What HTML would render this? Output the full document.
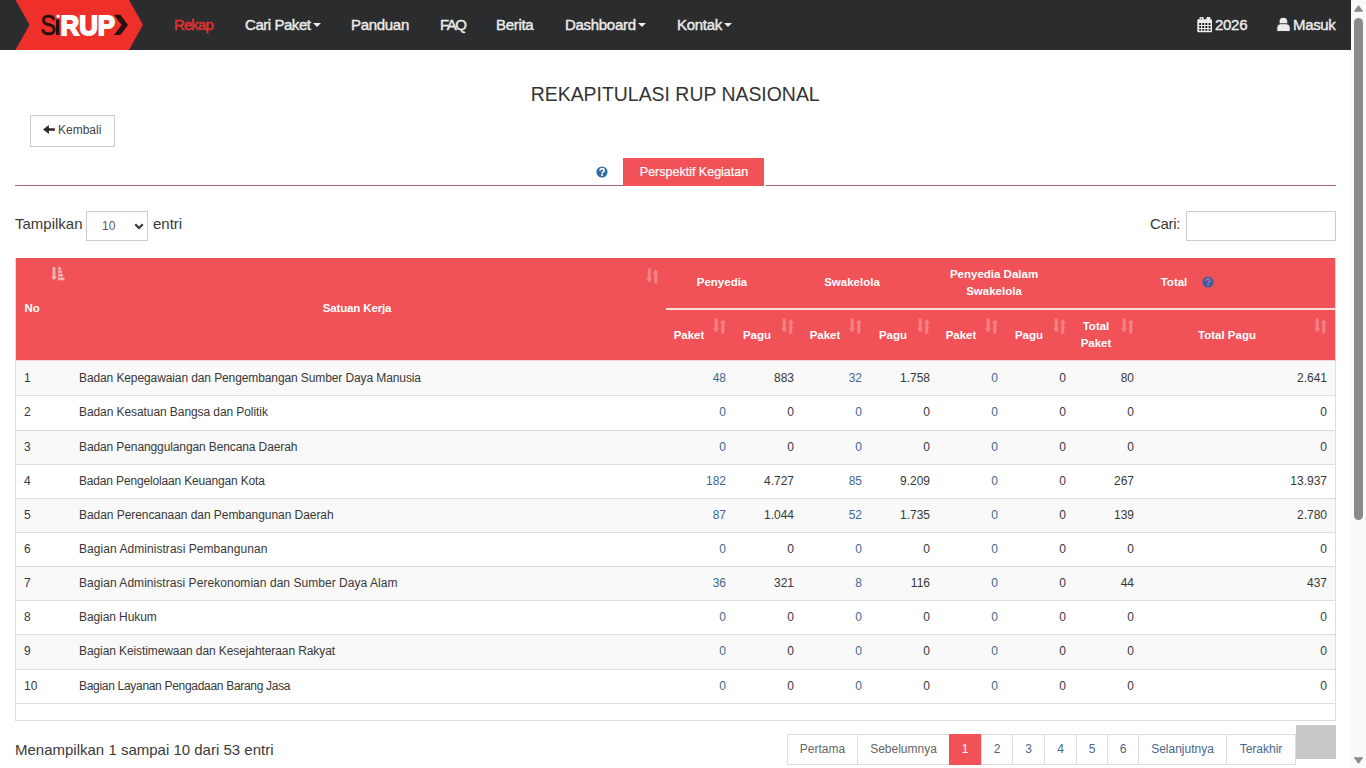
<!DOCTYPE html>
<html><head><meta charset="utf-8">
<style>
*{box-sizing:border-box}
html,body{margin:0;padding:0;width:1366px;height:768px;overflow:hidden;background:#fff;font-family:"Liberation Sans",sans-serif;color:#333}
.a{position:absolute;white-space:nowrap}
#nav{position:absolute;left:0;top:0;width:1351px;height:50px;background:#2b2c2e}
.ni{position:absolute;top:16px;font-size:15px;line-height:18px;color:#ececec;white-space:nowrap;letter-spacing:-0.3px;-webkit-text-stroke:0.4px #ececec}
.caret{display:inline-block;width:0;height:0;border-left:4px solid transparent;border-right:4px solid transparent;border-top:4px solid #ececec;vertical-align:middle;margin-left:2px;position:relative;top:-1px}
#sb{position:absolute;left:1351px;top:0;width:15px;height:768px;background:#fafafa}
#thumb{position:absolute;left:3px;top:18px;width:9px;height:502px;background:#8a8a8a;border-radius:5px}
#title{position:absolute;left:0;width:1351px;top:82px;text-align:center;font-size:21px;line-height:24px;color:#333}
#title span{display:inline-block;transform:scaleX(0.925);transform-origin:50% 50%}
#kembali{position:absolute;left:30px;top:115px;width:85px;height:32px;border:1px solid #ccc;font-size:12px;line-height:28px;color:#444;padding-left:27px}
#tabline{position:absolute;left:15px;top:185px;width:1321px;height:1px;background:#a36a6e}
#tab{position:absolute;left:623px;top:158px;width:143px;height:28px;background:#f05257;color:#fff;font-size:12.5px;line-height:28px;text-align:center;border-right:2px solid #fff;padding-left:1px;-webkit-text-stroke:0.2px #fff}
.lbl{position:absolute;font-size:15px;line-height:18px;color:#3a3a3a;white-space:nowrap}
#sel{position:absolute;left:86px;top:211px;width:62px;height:30px;border:1px solid #ccc;background:#fff}
#inp{position:absolute;left:1186px;top:211px;width:150px;height:30px;border:1px solid #ccc;background:#fff}
#tbl{position:absolute;left:15px;top:258px;width:1321px;height:463px;border:1px solid #ddd;border-top:0}
#thead{position:absolute;left:0;top:0;width:1319px;height:102px;background:#f05257}
.h{position:absolute;font-weight:bold;font-size:11.5px;line-height:17px;color:#fff;white-space:nowrap}
.hc{transform:translateX(-50%);text-align:center}
.si{position:absolute;line-height:0}
.row{position:absolute;left:0;width:1319px;border-top:1px solid #ddd}
.c{position:absolute;top:0;font-size:12px;line-height:16px;color:#383838;white-space:nowrap}
.sk{letter-spacing:-0.09px}
.lk{color:#40698f}
.pg{position:absolute;top:734px;height:31px;border:1px solid #ddd;font-size:12px;line-height:29px;text-align:center;color:#666;background:#fff}
.pg.num{color:#48698a}
.pg.act{background:#f05257;border-color:#f05257;color:#fff;z-index:2}
#totop{position:absolute;left:1296px;top:725px;width:40px;height:34px;background:#c9c9c9}
</style></head><body>
<div id="nav">
  <svg class="a" style="left:0;top:0" width="160" height="50" viewBox="0 0 160 50">
    <polygon points="15.5,0 129,0 143,24.8 129,50 15.5,50 29.5,24.8" fill="#ee2f2a"/>
    <text x="40.5" y="34.7" font-family="Liberation Sans" font-size="28.6" fill="#2a0f10" stroke="#2a0f10" stroke-width="0.7" textLength="15.6" lengthAdjust="spacingAndGlyphs">S</text>
    <rect x="56" y="19.5" width="3.4" height="15.5" fill="#2a0f10"/>
    <rect x="56.6" y="14.8" width="3" height="3" fill="#fff"/>
    <text x="60.5" y="35" font-family="Liberation Sans" font-weight="bold" font-size="28" fill="#fff" stroke="#fff" stroke-width="1.8" textLength="54.5" lengthAdjust="spacingAndGlyphs">RUP</text>
    <polygon points="114,14.8 120.4,14.8 128,24.9 120.4,35 114,35 121.6,24.9" fill="#2a0f10"/>
  </svg>
  <div class="ni" style="left:174px;color:#e83230;-webkit-text-stroke-color:#e83230;letter-spacing:-0.9px">Rekap</div>
  <div class="ni" style="left:245px;letter-spacing:-0.45px">Cari Paket<span class="caret"></span></div>
  <div class="ni" style="left:351px">Panduan</div>
  <div class="ni" style="left:440px;letter-spacing:-1.5px">FAQ</div>
  <div class="ni" style="left:496px">Berita</div>
  <div class="ni" style="left:565px">Dashboard<span class="caret"></span></div>
  <div class="ni" style="left:677px">Kontak<span class="caret"></span></div>
  <svg class="a" style="left:1196px;top:16px" width="17" height="17" viewBox="0 0 17 17"><rect x="1.3" y="3.2" width="14.7" height="13.1" rx="1" fill="#ececec"/><rect x="3.5" y="1" width="4.1" height="3.5" rx="1" fill="#ececec"/><rect x="10.4" y="1" width="4" height="3.5" rx="1" fill="#ececec"/><path d="M5.3 1.5v2.5" stroke="#555" stroke-width="0.7"/><path d="M3.2 7.1h1.9v1.8h-1.9zM3.2 10.1h1.9v1.8h-1.9zM3.2 13h1.9v1.8h-1.9zM6.3 7.1h1.9v1.8h-1.9zM6.3 10.1h1.9v1.8h-1.9zM6.3 13h1.9v1.8h-1.9zM9.4 7.1h1.9v1.8h-1.9zM9.4 10.1h1.9v1.8h-1.9zM9.4 13h1.9v1.8h-1.9zM12.6 7.1h1.9v1.8h-1.9zM12.6 10.1h1.9v1.8h-1.9zM12.6 13h1.9v1.8h-1.9z" fill="#1e1e1e"/></svg>
  <div class="ni" style="left:1215px">2026</div>
  <svg class="a" style="left:1276px;top:17px" width="15" height="15" viewBox="0 0 15 15"><circle cx="7.4" cy="4.7" r="3.9" fill="#ececec"/><path d="M0.8 13.2V10.6Q0.8 6.7 4.7 6.7H10.2Q14.2 6.7 14.2 10.6V13.2Q14.2 14.5 12.9 14.5H2.1Q0.8 14.5 0.8 13.2Z" fill="#ececec" stroke="#2b2c2e" stroke-width="0.9"/></svg>
  <div class="ni" style="left:1293px;letter-spacing:-0.35px">Masuk</div>
</div>
<div id="sb"><svg class="a" style="left:3px;top:5px" width="9" height="7" viewBox="0 0 9 7"><path d="M4.5 0.4L8.9 6.4H0.1z" fill="#8a8a8a" stroke="#8a8a8a" stroke-width="0.6" stroke-linejoin="round"/></svg><div id="thumb"></div><svg class="a" style="left:3px;top:757px" width="9" height="7" viewBox="0 0 9 7"><path d="M4.5 6.6L8.9 0.6H0.1z" fill="#8a8a8a" stroke="#8a8a8a" stroke-width="0.6" stroke-linejoin="round"/></svg></div>

<div id="title"><span>REKAPITULASI RUP NASIONAL</span></div>
<div id="kembali"><svg class="a" style="left:12px;top:9px" width="12" height="10" viewBox="0 0 12 10"><path d="M0 4.45L5.9 0V3.2H11.9V5.7H5.9V8.9Z" fill="#2b2b2b"/></svg>Kembali</div>
<div id="tabline"></div>
<svg class="a" style="left:596.3px;top:165.8px" width="12" height="12" viewBox="0 0 12 12"><circle cx="6" cy="6" r="5.6" fill="#2f6ea5"/><path d="M4.1 4.8Q4.1 2.6 6.1 2.6Q8.1 2.6 8.1 4.4Q8.1 5.4 7 5.9Q6.1 6.3 6.1 7.4" fill="none" stroke="#fff" stroke-width="1.7"/><rect x="5.2" y="8.2" width="1.8" height="1.7" fill="#fff"/></svg>
<div id="tab">Perspektif Kegiatan</div>

<div class="lbl" style="left:15px;top:215px">Tampilkan</div>
<div id="sel"><span class="a" style="left:15px;top:7px;font-size:12px;line-height:14px;color:#5a5a5a">10</span><svg class="a" style="left:47px;top:11px" width="10" height="7" viewBox="0 0 10 7"><path d="M1.2 1.3L5 5 8.8 1.3" fill="none" stroke="#3a3a3a" stroke-width="2.3"/></svg></div>
<div class="lbl" style="left:153px;top:215px">entri</div>
<div class="lbl" style="left:1150px;top:215px;letter-spacing:-0.3px">Cari:</div>
<div id="inp"></div>

<div id="tbl">
 <div id="thead">
  <div class="h" style="left:8.5px;top:42px">No</div>
  <svg class="si" style="left:34.5px;top:9px" width="14" height="14" viewBox="0 0 14 14"><path d="M1.6 0h2.8v9.6h1.8L3 13.3-0.2 9.6h1.8z M7 0.2h3v2.6H7z M7 3.6h4v2.6H7z M7 7h5v2.6H7z M7 10.5h6.4v2.7H7z" fill="#fff" fill-opacity="0.55"/></svg>
  <div class="h hc" style="left:341px;top:42px;letter-spacing:-0.15px">Satuan Kerja</div>
  <span class="si" style="left:630px;top:10px"><svg width="13" height="16" viewBox="0 0 13 16"><path d="M1.7 0.6h3v10h1.7L3.2 14.2 0 10.6h1.7z M9.8 1.4L13 5h-1.7v10.4h-3V5H6.6z" fill="#fff" fill-opacity="0.28"/></svg></span>
  <div class="h hc" style="left:706px;top:16px">Penyedia</div>
  <div class="h hc" style="left:836px;top:16px">Swakelola</div>
  <div class="h hc" style="left:978px;top:8px">Penyedia Dalam<br>Swakelola</div>
  <div class="h hc" style="left:1158px;top:16px">Total</div>
  <svg class="si" style="left:1186px;top:18px" width="12" height="12" viewBox="0 0 12 12"><circle cx="6" cy="6" r="5.6" fill="#3b5ea3"/><path d="M4.1 4.8Q4.1 2.6 6.1 2.6Q8.1 2.6 8.1 4.4Q8.1 5.4 7 5.9Q6.1 6.3 6.1 7.4" fill="none" stroke="#b87aa0" stroke-width="1.4"/><rect x="5.3" y="8.3" width="1.6" height="1.5" fill="#b87aa0"/></svg>
  <div style="position:absolute;left:650px;top:50px;width:669px;height:2px;background:#fdd"></div>
  <div class="h hc" style="left:673px;top:69px">Paket</div>
  <div class="h hc" style="left:741px;top:69px">Pagu</div>
  <div class="h hc" style="left:809px;top:69px">Paket</div>
  <div class="h hc" style="left:877px;top:69px">Pagu</div>
  <div class="h hc" style="left:945px;top:69px">Paket</div>
  <div class="h hc" style="left:1013px;top:69px">Pagu</div>
  <div class="h hc" style="left:1080px;top:60px">Total<br>Paket</div>
  <div class="h hc" style="left:1211px;top:69px">Total Pagu</div>
  <span class="si" style="left:697px;top:60px"><svg width="13" height="16" viewBox="0 0 13 16"><path d="M1.7 0.6h3v10h1.7L3.2 14.2 0 10.6h1.7z M9.8 1.4L13 5h-1.7v10.4h-3V5H6.6z" fill="#fff" fill-opacity="0.28"/></svg></span>
  <span class="si" style="left:765px;top:60px"><svg width="13" height="16" viewBox="0 0 13 16"><path d="M1.7 0.6h3v10h1.7L3.2 14.2 0 10.6h1.7z M9.8 1.4L13 5h-1.7v10.4h-3V5H6.6z" fill="#fff" fill-opacity="0.28"/></svg></span>
  <span class="si" style="left:833px;top:60px"><svg width="13" height="16" viewBox="0 0 13 16"><path d="M1.7 0.6h3v10h1.7L3.2 14.2 0 10.6h1.7z M9.8 1.4L13 5h-1.7v10.4h-3V5H6.6z" fill="#fff" fill-opacity="0.28"/></svg></span>
  <span class="si" style="left:901px;top:60px"><svg width="13" height="16" viewBox="0 0 13 16"><path d="M1.7 0.6h3v10h1.7L3.2 14.2 0 10.6h1.7z M9.8 1.4L13 5h-1.7v10.4h-3V5H6.6z" fill="#fff" fill-opacity="0.28"/></svg></span>
  <span class="si" style="left:969px;top:60px"><svg width="13" height="16" viewBox="0 0 13 16"><path d="M1.7 0.6h3v10h1.7L3.2 14.2 0 10.6h1.7z M9.8 1.4L13 5h-1.7v10.4h-3V5H6.6z" fill="#fff" fill-opacity="0.28"/></svg></span>
  <span class="si" style="left:1037px;top:60px"><svg width="13" height="16" viewBox="0 0 13 16"><path d="M1.7 0.6h3v10h1.7L3.2 14.2 0 10.6h1.7z M9.8 1.4L13 5h-1.7v10.4h-3V5H6.6z" fill="#fff" fill-opacity="0.28"/></svg></span>
  <span class="si" style="left:1105px;top:60px"><svg width="13" height="16" viewBox="0 0 13 16"><path d="M1.7 0.6h3v10h1.7L3.2 14.2 0 10.6h1.7z M9.8 1.4L13 5h-1.7v10.4h-3V5H6.6z" fill="#fff" fill-opacity="0.28"/></svg></span>
  <span class="si" style="left:1298px;top:60px"><svg width="13" height="16" viewBox="0 0 13 16"><path d="M1.7 0.6h3v10h1.7L3.2 14.2 0 10.6h1.7z M9.8 1.4L13 5h-1.7v10.4h-3V5H6.6z" fill="#fff" fill-opacity="0.28"/></svg></span>
 </div>
<div class="row" style="top:102px;height:36px;background:#f9f9f9;border-top-color:#f3d3d4"><div class="a" style="left:0;top:8.5px;width:100%;height:16px"><span class="c" style="left:8px">1</span><span class="c" style="left:63px;letter-spacing:-0.105px">Badan Kepegawaian dan Pengembangan Sumber Daya Manusia</span><span class="c r lk" style="right:609px">48</span><span class="c r" style="right:541px">883</span><span class="c r lk" style="right:473px">32</span><span class="c r" style="right:405px">1.758</span><span class="c r lk" style="right:337px">0</span><span class="c r" style="right:269px">0</span><span class="c r" style="right:201px">80</span><span class="c r" style="right:8px">2.641</span></div></div>
<div class="row" style="top:137px;height:36px;background:#fff"><div class="a" style="left:0;top:8px;width:100%;height:16px"><span class="c" style="left:8px">2</span><span class="c" style="left:63px;letter-spacing:-0.081px">Badan Kesatuan Bangsa dan Politik</span><span class="c r lk" style="right:609px">0</span><span class="c r" style="right:541px">0</span><span class="c r lk" style="right:473px">0</span><span class="c r" style="right:405px">0</span><span class="c r lk" style="right:337px">0</span><span class="c r" style="right:269px">0</span><span class="c r" style="right:201px">0</span><span class="c r" style="right:8px">0</span></div></div>
<div class="row" style="top:172px;height:35px;background:#f9f9f9"><div class="a" style="left:0;top:8px;width:100%;height:16px"><span class="c" style="left:8px">3</span><span class="c" style="left:63px;letter-spacing:-0.111px">Badan Penanggulangan Bencana Daerah</span><span class="c r lk" style="right:609px">0</span><span class="c r" style="right:541px">0</span><span class="c r lk" style="right:473px">0</span><span class="c r" style="right:405px">0</span><span class="c r lk" style="right:337px">0</span><span class="c r" style="right:269px">0</span><span class="c r" style="right:201px">0</span><span class="c r" style="right:8px">0</span></div></div>
<div class="row" style="top:206px;height:35px;background:#fff"><div class="a" style="left:0;top:8px;width:100%;height:16px"><span class="c" style="left:8px">4</span><span class="c" style="left:63px;letter-spacing:-0.163px">Badan Pengelolaan Keuangan Kota</span><span class="c r lk" style="right:609px">182</span><span class="c r" style="right:541px">4.727</span><span class="c r lk" style="right:473px">85</span><span class="c r" style="right:405px">9.209</span><span class="c r lk" style="right:337px">0</span><span class="c r" style="right:269px">0</span><span class="c r" style="right:201px">267</span><span class="c r" style="right:8px">13.937</span></div></div>
<div class="row" style="top:240px;height:35px;background:#f9f9f9"><div class="a" style="left:0;top:8px;width:100%;height:16px"><span class="c" style="left:8px">5</span><span class="c" style="left:63px;letter-spacing:-0.057px">Badan Perencanaan dan Pembangunan Daerah</span><span class="c r lk" style="right:609px">87</span><span class="c r" style="right:541px">1.044</span><span class="c r lk" style="right:473px">52</span><span class="c r" style="right:405px">1.735</span><span class="c r lk" style="right:337px">0</span><span class="c r" style="right:269px">0</span><span class="c r" style="right:201px">139</span><span class="c r" style="right:8px">2.780</span></div></div>
<div class="row" style="top:274px;height:35px;background:#fff"><div class="a" style="left:0;top:8px;width:100%;height:16px"><span class="c" style="left:8px">6</span><span class="c" style="left:63px;letter-spacing:0.053px">Bagian Administrasi Pembangunan</span><span class="c r lk" style="right:609px">0</span><span class="c r" style="right:541px">0</span><span class="c r lk" style="right:473px">0</span><span class="c r" style="right:405px">0</span><span class="c r lk" style="right:337px">0</span><span class="c r" style="right:269px">0</span><span class="c r" style="right:201px">0</span><span class="c r" style="right:8px">0</span></div></div>
<div class="row" style="top:308px;height:35px;background:#f9f9f9"><div class="a" style="left:0;top:8px;width:100%;height:16px"><span class="c" style="left:8px">7</span><span class="c" style="left:63px;letter-spacing:0.045px">Bagian Administrasi Perekonomian dan Sumber Daya Alam</span><span class="c r lk" style="right:609px">36</span><span class="c r" style="right:541px">321</span><span class="c r lk" style="right:473px">8</span><span class="c r" style="right:405px">116</span><span class="c r lk" style="right:337px">0</span><span class="c r" style="right:269px">0</span><span class="c r" style="right:201px">44</span><span class="c r" style="right:8px">437</span></div></div>
<div class="row" style="top:342px;height:35px;background:#fff"><div class="a" style="left:0;top:8px;width:100%;height:16px"><span class="c" style="left:8px">8</span><span class="c" style="left:63px;letter-spacing:-0.090px">Bagian Hukum</span><span class="c r lk" style="right:609px">0</span><span class="c r" style="right:541px">0</span><span class="c r lk" style="right:473px">0</span><span class="c r" style="right:405px">0</span><span class="c r lk" style="right:337px">0</span><span class="c r" style="right:269px">0</span><span class="c r" style="right:201px">0</span><span class="c r" style="right:8px">0</span></div></div>
<div class="row" style="top:376px;height:36px;background:#f9f9f9"><div class="a" style="left:0;top:8px;width:100%;height:16px"><span class="c" style="left:8px">9</span><span class="c" style="left:63px;letter-spacing:-0.095px">Bagian Keistimewaan dan Kesejahteraan Rakyat</span><span class="c r lk" style="right:609px">0</span><span class="c r" style="right:541px">0</span><span class="c r lk" style="right:473px">0</span><span class="c r" style="right:405px">0</span><span class="c r lk" style="right:337px">0</span><span class="c r" style="right:269px">0</span><span class="c r" style="right:201px">0</span><span class="c r" style="right:8px">0</span></div></div>
<div class="row" style="top:411px;height:35px;background:#fff"><div class="a" style="left:0;top:8px;width:100%;height:16px"><span class="c" style="left:8px">10</span><span class="c" style="left:63px;letter-spacing:-0.304px">Bagian Layanan Pengadaan Barang Jasa</span><span class="c r lk" style="right:609px">0</span><span class="c r" style="right:541px">0</span><span class="c r lk" style="right:473px">0</span><span class="c r" style="right:405px">0</span><span class="c r lk" style="right:337px">0</span><span class="c r" style="right:269px">0</span><span class="c r" style="right:201px">0</span><span class="c r" style="right:8px">0</span></div></div>
 <div class="row" style="top:445px;height:17px;background:#fff"></div>
</div>

<div class="lbl" style="left:15px;top:741px">Menampilkan 1 sampai 10 dari 53 entri</div>
<div class="pg " style="left:787px;width:71px">Pertama</div>
<div class="pg " style="left:857px;width:93px">Sebelumnya</div>
<div class="pg act" style="left:949px;width:32px">1</div>
<div class="pg num" style="left:981px;width:32px">2</div>
<div class="pg num" style="left:1012px;width:33px">3</div>
<div class="pg num" style="left:1044px;width:33px">4</div>
<div class="pg num" style="left:1076px;width:32px">5</div>
<div class="pg num" style="left:1107px;width:32px">6</div>
<div class="pg num" style="left:1138px;width:89px">Selanjutnya</div>
<div class="pg num" style="left:1226px;width:70px">Terakhir</div>

<div id="totop"></div>
</body></html>
